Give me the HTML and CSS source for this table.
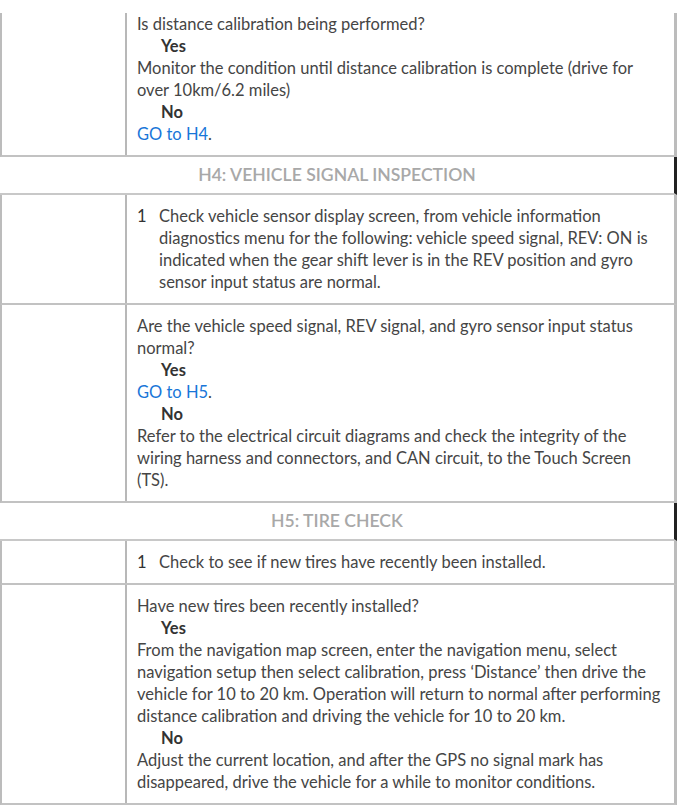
FILE: index.html
```html
<!DOCTYPE html>
<html lang="en">
<head>
<meta charset="utf-8">
<title>Diagnostics</title>
<link rel="stylesheet" href="styles.css">
</head>
<body>
<div class="table">
  <div class="row first">
    <div class="cell-left"></div>
    <div class="cell">
      <p>Is distance calibration being performed?</p>
      <p class="answer">Yes</p>
      <p>Monitor the condition until distance calibration is complete (drive for over 10km/6.2 miles)</p>
      <p class="answer">No</p>
      <p><a class="link" href="#h4">GO to H4</a>.</p>
    </div>
  </div>
  <div class="heading" id="h4">H4: VEHICLE SIGNAL INSPECTION</div>
  <div class="row">
    <div class="cell-left"></div>
    <div class="cell">
      <div class="step"><span class="num">1</span><span class="step-text">Check vehicle sensor display screen, from vehicle information diagnostics menu for the following: vehicle speed signal, REV: ON is indicated when the gear shift lever is in the REV position and gyro sensor input status are normal.</span></div>
    </div>
  </div>
  <div class="row">
    <div class="cell-left"></div>
    <div class="cell">
      <p>Are the vehicle speed signal, REV signal, and gyro sensor input status normal?</p>
      <p class="answer">Yes</p>
      <p><a class="link" href="#h5">GO to H5</a>.</p>
      <p class="answer">No</p>
      <p>Refer to the electrical circuit diagrams and check the integrity of the wiring harness and connectors, and CAN circuit, to the Touch Screen (TS).</p>
    </div>
  </div>
  <div class="heading" id="h5">H5: TIRE CHECK</div>
  <div class="row">
    <div class="cell-left"></div>
    <div class="cell">
      <div class="step"><span class="num">1</span><span class="step-text">Check to see if new tires have recently been installed.</span></div>
    </div>
  </div>
  <div class="row">
    <div class="cell-left"></div>
    <div class="cell">
      <p>Have new tires been recently installed?</p>
      <p class="answer">Yes</p>
      <p>From the navigation map screen, enter the navigation menu, select navigation setup then select calibration, press ‘Distance’ then drive the vehicle for 10 to 20 km. Operation will return to normal after performing distance calibration and driving the vehicle for 10 to 20 km.</p>
      <p class="answer">No</p>
      <p>Adjust the current location, and after the GPS no signal mark has disappeared, drive the vehicle for a while to monitor conditions.</p>
    </div>
  </div>
</div>
</body>
</html>
```
FILE: styles.css
```css
html, body {
  margin: 0;
  padding: 0;
  background: #ffffff;
}
body {
  font-family: Lato, "Noto Sans", sans-serif;
  font-size: 16.5px;
  line-height: 22px;
  color: #454545;
  padding-top: 13px;
}
.table {
  width: 677px;
}
.row {
  display: grid;
  grid-template-columns: 125px 1fr;
  border-left: 2px solid #bcbcbc;
  border-right: 3px solid #bcbcbc;
  border-bottom: 2px solid #c2c2c2;
}
.cell-left {
  border-right: 2px solid #b8b8b8;
}
.cell {
  padding: 10px;
}
.row.first .cell {
  padding-top: 0;
}
.cell p {
  margin: 0;
}
.answer {
  font-weight: 700;
  color: #333333;
  padding-left: 24px;
}
.link {
  color: #1876d8;
  text-decoration: none;
}
.step {
  display: flex;
}
.num {
  width: 22px;
  flex: none;
  color: #333333;
}
.heading {
  height: 36px;
  line-height: 36px;
  text-align: center;
  font-size: 17.6px;
  font-weight: 600;
  color: #a8a8a8;
  border-right: 3px solid #222222;
  border-bottom: 2px solid #c8c8c8;
}
```
